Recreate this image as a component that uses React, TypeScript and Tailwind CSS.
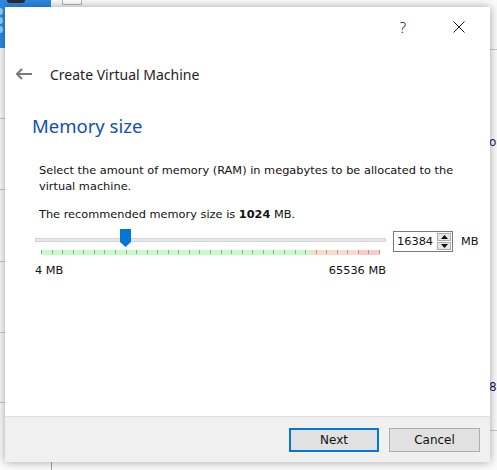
const ticks = Array.from({ length: 33 });

const BackWindow = () => (
  <div className="absolute inset-0">
    <div className="absolute left-0 top-0 w-[51px] h-[7px] bg-[#2a8ae6]">
      <div className="ml-[7px] w-[18px] h-[3px] bg-[#2c2c2c] rounded-b-sm" />
    </div>
    <div className="absolute left-0 top-[7px] w-[5px] h-[41px] bg-[#2a8ae6] flex flex-col gap-[2px] pt-[1px]">
      <div className="w-[3px] h-[7px] bg-[#8fd0f5] rounded-r-sm" />
      <div className="w-[3px] h-[7px] bg-[#8fd0f5] rounded-r-sm" />
      <div className="w-[3px] h-[7px] bg-[#8fd0f5] rounded-r-sm" />
    </div>
    <div className="absolute left-[62px] top-0 w-[20px] h-[5px] bg-white border border-t-0 border-[#b5b5b5]" />
    <div className="absolute left-0 top-[118px] w-[5px] h-px bg-[#c8c8c8]" />
    <div className="absolute left-0 top-[189px] w-[5px] h-px bg-[#c8c8c8]" />
    <div className="absolute left-0 top-[261px] w-[5px] h-px bg-[#c8c8c8]" />
    <div className="absolute left-0 top-[332px] w-[5px] h-px bg-[#c8c8c8]" />
    <div className="absolute left-0 top-[402px] w-[5px] h-px bg-[#c8c8c8]" />
    <div className="absolute left-[490px] top-[49px] w-[7px] h-px bg-[#c8c8c8]" />
    <div className="absolute left-[490px] top-[430px] w-[7px] h-px bg-[#c8c8c8]" />
    <div className="absolute left-[51px] top-[462px] w-px h-[8px] bg-[#a0a0a0]" />
    <div className="absolute left-[489px] top-[133px] text-[12px] text-[#1b1b60] font-['DejaVu_Sans',sans-serif]">or</div>
    <div className="absolute left-[489px] top-[378px] text-[12px] text-[#1b1b60] font-['DejaVu_Sans',sans-serif]">8)</div>
  </div>
);

export default function App() {
  return (
    <div className="relative w-[497px] h-[470px] overflow-hidden bg-[#fbfbfb] font-['Noto_Sans',sans-serif]">
      <BackWindow />
      <div className="absolute left-[5px] top-[7px] w-[485px] h-[455px] bg-white flex flex-col shadow-[0_0_9px_rgba(0,0,0,0.35)]">
        <div className="h-[40px] flex items-center justify-end pr-[25px]">
          <span className="text-[15px] text-[#1a1a1a] leading-none font-light">?</span>
          <svg className="ml-[47px]" width="12" height="12" viewBox="0 0 12 12">
            <path d="M0.5 0.5L11.5 11.5M11.5 0.5L0.5 11.5" stroke="#1a1a1a" strokeWidth="1" fill="none" />
          </svg>
        </div>
        <div className="h-[54px] flex items-center pl-[11px]">
          <svg width="17" height="12" viewBox="0 0 17 12">
            <path d="M1 6H16M6 1L1 6L6 11" stroke="#7a7a7a" strokeWidth="2" fill="none" />
          </svg>
          <span className="ml-[17px] text-[14px] text-[#1e1e1e]">Create Virtual Machine</span>
        </div>
        <div className="mt-[11px] pl-[27px] text-[18.5px] leading-[28px] text-[#0f4fb8]">Memory size</div>
        <div className="mt-[22px] pl-[34px] pr-[14px] font-['DejaVu_Sans',sans-serif] text-[11.35px] leading-[16px] text-[#111]">
          <p>Select the amount of memory (RAM) in megabytes to be allocated to the virtual machine.</p>
          <p className="mt-[12px]">
            The recommended memory size is <b>1024</b> MB.
          </p>
        </div>
        <div className="mt-[9px] pl-[30px] flex items-start">
          <div className="w-[351px] flex flex-col">
            <div className="relative h-[19px]">
              <div className="absolute left-0 top-[7px] w-[351px] h-[4px] bg-[#e7e7e7] border border-[#d4d4d4]" />
              <svg className="absolute left-[85px] top-[-2px]" width="11" height="18" viewBox="0 0 11 18">
                <path d="M0 0H11V13L5.5 18L0 13Z" fill="#0078d7" />
              </svg>
            </div>
            <div className="ml-[6px] w-[339px] h-[5px] relative flex">
              <div className="w-[270px] h-full bg-[#c6fcc6]" />
              <div className="w-[47px] h-full bg-[#ffd9c9]" />
              <div className="w-[22px] h-full bg-[#ffc9c9]" />
              <div className="absolute inset-0 flex justify-between">
                {ticks.map((_, i) => (
                  <div key={i} className="w-px h-[4px] bg-[#a0a0a0]" />
                ))}
              </div>
            </div>
            <div className="mt-[7px] flex justify-between font-['DejaVu_Sans',sans-serif] text-[11.35px] leading-[16px] text-[#111]">
              <span>4 MB</span>
              <span>65536 MB</span>
            </div>
          </div>
          <div className="ml-[7px] w-[60px] h-[21px] border border-[#7a7a7a] bg-white flex items-center">
            <span className="ml-[3px] flex-1 font-['DejaVu_Sans',sans-serif] text-[11.35px] text-[#111]">16384</span>
            <div className="mr-[1px] w-[14px] h-[17px] flex flex-col gap-px">
              <div className="flex-1 bg-[#e6e6e6] border border-[#adadad] flex items-center justify-center">
                <svg width="7" height="4" viewBox="0 0 7 4"><path d="M0 4L3.5 0L7 4Z" fill="#111" /></svg>
              </div>
              <div className="flex-1 bg-[#e6e6e6] border border-[#adadad] flex items-center justify-center">
                <svg width="7" height="4" viewBox="0 0 7 4"><path d="M0 0L3.5 4L7 0Z" fill="#111" /></svg>
              </div>
            </div>
          </div>
          <span className="ml-[8px] mt-[2px] leading-[16px] font-['DejaVu_Sans',sans-serif] text-[11.35px] text-[#111]">MB</span>
        </div>
        <div className="mt-auto h-[46px] bg-[#f0f0f0] border-t border-[#dfdfdf] flex items-center justify-end pr-[10px] gap-[10px]">
          <button className="w-[90px] h-[24px] bg-[#e1e1e1] border-2 border-[#0078d7] text-[12px] text-[#111] font-['DejaVu_Sans',sans-serif]">
            Next
          </button>
          <button className="w-[91px] h-[24px] bg-[#e1e1e1] border border-[#adadad] text-[12px] text-[#111] font-['DejaVu_Sans',sans-serif]">
            Cancel
          </button>
        </div>
      </div>
    </div>
  );
}
